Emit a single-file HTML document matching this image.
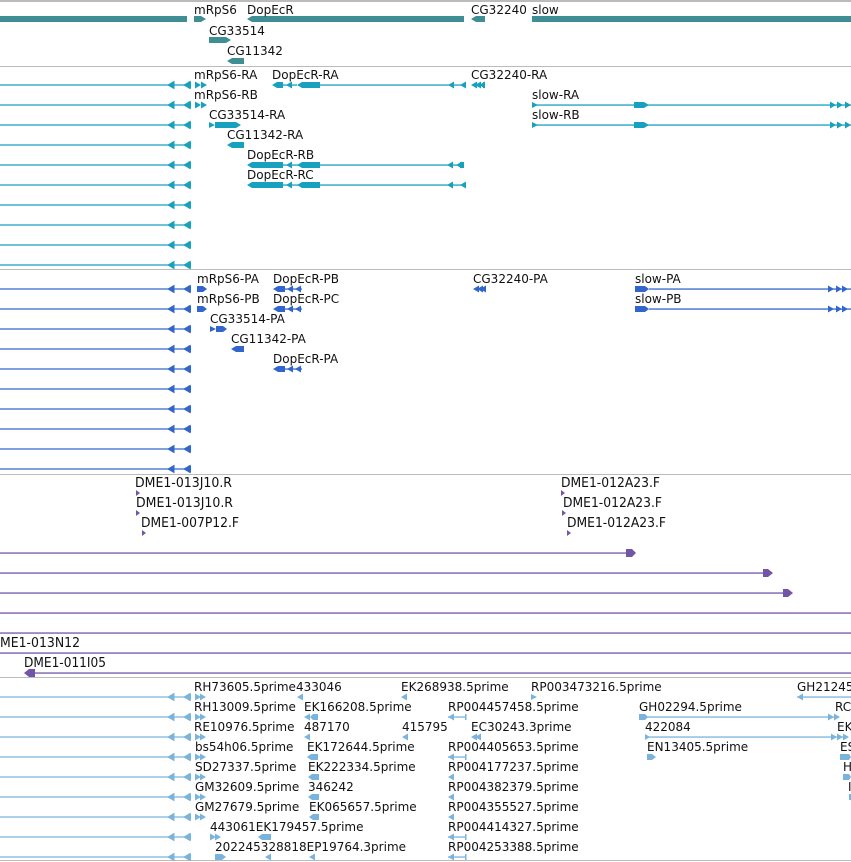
<!DOCTYPE html>
<html><head><meta charset="utf-8"><style>
html,body{margin:0;padding:0;background:#fff;width:851px;height:862px;overflow:hidden}
svg{display:block}
text{font-family:"DejaVu Sans","Liberation Sans",sans-serif;font-size:12px;fill:#111}
.p text{font-family:"DejaVu Sans Condensed","DejaVu Sans",sans-serif;font-size:13px}
</style></head><body>
<svg width="851" height="862" viewBox="0 0 851 862" xmlns="http://www.w3.org/2000/svg">
<defs>
<path id="la" d="M0 0L6 -3.5L6 3.5Z"/>
<path id="ra" d="M0 0L-6 -3.5L-6 3.5Z"/>
<g id="left">
<line x1="0" y1="0" x2="190" y2="0" stroke-width="1.2"/>
<use href="#la" x="168" y="0"/><use href="#la" x="184" y="0"/><rect x="189" y="-3" width="1.5" height="6"/>
</g>
</defs>
<g fill="#bbb">
<rect x="0" y="0" width="851" height="2"/>
<rect x="0" y="66" width="851" height="1"/>
<rect x="0" y="269" width="851" height="1"/>
<rect x="0" y="474" width="851" height="1"/>
<rect x="0" y="677" width="851" height="1"/>
<rect x="0" y="860" width="851" height="1"/>
</g>

<g fill="#3e8e93">
<rect x="0" y="16" width="187" height="6"/>
<path d="M194 16H201L206 19L201 22H194Z"/>
<path d="M247 19L252 16H464V22H252Z"/>
<path d="M471 19L476 16H485V22H476Z"/>
<rect x="532" y="16" width="319" height="6"/>
<path d="M209 37H226L231 40L226 43H209Z"/>
<path d="M227 61L232 58H244V64H232Z"/>
</g>
<text x="194" y="14">mRpS6</text><text x="247" y="14">DopEcR</text><text x="471" y="14">CG32240</text><text x="532" y="14">slow</text>
<text x="209" y="35">CG33514</text><text x="227" y="55">CG11342</text>

<g fill="#17a1bf" stroke="#17a1bf">
<use href="#left" y="85"/><use href="#left" y="105"/><use href="#left" y="125"/><use href="#left" y="145"/><use href="#left" y="165"/>
<use href="#left" y="185"/><use href="#left" y="205"/><use href="#left" y="225"/><use href="#left" y="245"/><use href="#left" y="265"/>
</g>
<g fill="#17a1bf" stroke="none">
<use href="#ra" x="201" y="85"/><use href="#ra" x="207" y="85"/>
<use href="#ra" x="201" y="105"/><use href="#ra" x="207" y="105"/>
<path d="M272 85L277 82H283V88H277Z"/><rect x="283" y="84.4" width="14" height="1.3"/><use href="#la" x="286" y="85"/>
<path d="M297 85L302 82H320V88H302Z"/><rect x="320" y="84.4" width="146" height="1.3"/><use href="#la" x="448" y="85"/><use href="#la" x="460" y="85"/>
<use href="#la" x="471" y="85"/><use href="#la" x="475" y="85"/><use href="#la" x="479" y="85"/><rect x="483" y="82" width="2" height="6"/>
<rect x="532" y="104.4" width="319" height="1.3"/><path d="M532 102L538 105L532 108Z"/><path d="M634 102H644L649 105L644 108H634Z"/>
<use href="#ra" x="836" y="105"/><use href="#ra" x="843" y="105"/><use href="#ra" x="851" y="105"/>
<rect x="532" y="124.4" width="319" height="1.3"/><path d="M532 122L538 125L532 128Z"/><path d="M634 122H644L649 125L644 128H634Z"/>
<use href="#ra" x="836" y="125"/><use href="#ra" x="843" y="125"/><use href="#ra" x="851" y="125"/>
<path d="M209 122L215 125L209 128Z"/><path d="M215 122H236L241 125L236 128H215Z"/>
<path d="M227 145L232 142H244V148H232Z"/>
<path d="M247 165L252 162H283V168H252Z"/><rect x="283" y="164.4" width="180" height="1.3"/><use href="#la" x="286" y="165"/>
<path d="M297 165L302 162H320V168H302Z"/><use href="#la" x="447" y="165"/><use href="#la" x="456" y="165"/><rect x="460" y="162" width="4" height="6"/>
<path d="M247 185L252 182H283V188H252Z"/><rect x="283" y="184.4" width="183" height="1.3"/><use href="#la" x="286" y="185"/>
<path d="M297 185L302 182H320V188H302Z"/><use href="#la" x="447" y="185"/><use href="#la" x="460" y="185"/>
</g>
<text x="194" y="79">mRpS6-RA</text><text x="272" y="79">DopEcR-RA</text><text x="471" y="79">CG32240-RA</text>
<text x="194" y="99">mRpS6-RB</text><text x="532" y="99">slow-RA</text>
<text x="209" y="119">CG33514-RA</text><text x="532" y="119">slow-RB</text>
<text x="227" y="139">CG11342-RA</text>
<text x="247" y="159">DopEcR-RB</text><text x="247" y="179">DopEcR-RC</text>

<g fill="#3366cc" stroke="#3366cc">
<use href="#left" y="289"/><use href="#left" y="309"/><use href="#left" y="329"/><use href="#left" y="349"/><use href="#left" y="369"/>
<use href="#left" y="389"/><use href="#left" y="409"/><use href="#left" y="429"/><use href="#left" y="449"/><use href="#left" y="469"/>
</g>
<g fill="#3366cc">
<path d="M197 286H203L207 289L203 292H197Z"/><path d="M197 306H203L207 309L203 312H197Z"/>
<path d="M273 289L278 286H285V292H278Z"/><rect x="285" y="288.4" width="17" height="1.3"/><use href="#la" x="287" y="289"/><use href="#la" x="295" y="289"/>
<path d="M273 309L278 306H285V312H278Z"/><rect x="285" y="308.4" width="17" height="1.3"/><use href="#la" x="287" y="309"/><use href="#la" x="295" y="309"/>
<path d="M273 369L278 366H285V372H278Z"/><rect x="285" y="368.4" width="17" height="1.3"/><use href="#la" x="287" y="369"/><use href="#la" x="295" y="369"/>
<use href="#la" x="473" y="289"/><use href="#la" x="477" y="289"/><use href="#la" x="480" y="289"/>
<path d="M635 286H645L649 289L645 292H635Z"/><rect x="649" y="288.4" width="202" height="1.3"/><use href="#ra" x="834" y="289"/><use href="#ra" x="842" y="289"/><use href="#ra" x="848" y="289"/>
<path d="M635 306H645L649 309L645 312H635Z"/><rect x="649" y="308.4" width="202" height="1.3"/><use href="#ra" x="834" y="309"/><use href="#ra" x="842" y="309"/><use href="#ra" x="848" y="309"/>
<path d="M210 326L216 329L210 332Z"/><path d="M216 326H223L227 329L223 332H216Z"/>
<path d="M231 349L236 346H244V352H236Z"/>
</g>
<text x="197" y="283">mRpS6-PA</text><text x="273" y="283">DopEcR-PB</text><text x="473" y="283">CG32240-PA</text><text x="635" y="283">slow-PA</text>
<text x="197" y="303">mRpS6-PB</text><text x="273" y="303">DopEcR-PC</text><text x="635" y="303">slow-PB</text>
<text x="210" y="323">CG33514-PA</text><text x="231" y="343">CG11342-PA</text><text x="273" y="363">DopEcR-PA</text>

<g class="p">
<g fill="#7355a8">
<path d="M136 490L140 493L136 496Z"/><path d="M136 510L140 513L136 516Z"/><path d="M142 530L146 533L142 536Z"/>
<path d="M561 490L565 493L561 496Z"/><path d="M562 510L566 513L562 516Z"/><path d="M567 530L571 533L567 536Z"/>
<rect x="0" y="552.4" width="630" height="1.3"/><path d="M626 549L632 549L636 553L632 557L626 557Z"/>
<rect x="0" y="572.4" width="767" height="1.3"/><path d="M763 569H768L773 573L768 577H763Z"/>
<rect x="0" y="592.4" width="787" height="1.3"/><path d="M783 589H788L793 593L788 597H783Z"/>
<rect x="0" y="612.4" width="851" height="1.3"/>
<rect x="0" y="632.4" width="851" height="1.3"/>
<rect x="0" y="652.4" width="851" height="1.3"/>
<rect x="30" y="672.4" width="821" height="1.3"/><path d="M24 673L29 669H35V677H29Z"/>
</g>
<text x="135" y="487" textLength="97" lengthAdjust="spacingAndGlyphs">DME1-013J10.R</text>
<text x="136" y="507" textLength="97" lengthAdjust="spacingAndGlyphs">DME1-013J10.R</text>
<text x="141" y="527" textLength="98" lengthAdjust="spacingAndGlyphs">DME1-007P12.F</text>
<text x="561" y="487" textLength="99" lengthAdjust="spacingAndGlyphs">DME1-012A23.F</text>
<text x="563" y="507" textLength="99" lengthAdjust="spacingAndGlyphs">DME1-012A23.F</text>
<text x="567" y="527" textLength="99" lengthAdjust="spacingAndGlyphs">DME1-012A23.F</text>
<text x="0" y="647" textLength="80" lengthAdjust="spacingAndGlyphs">ME1-013N12</text>
<text x="24" y="667" textLength="82" lengthAdjust="spacingAndGlyphs">DME1-011I05</text>
</g>

<g fill="#7ab4dc" stroke="#7ab4dc">
<use href="#left" y="697"/><use href="#left" y="717"/><use href="#left" y="737"/><use href="#left" y="757"/><use href="#left" y="777"/>
<use href="#left" y="797"/><use href="#left" y="817"/><use href="#left" y="837"/><use href="#left" y="857"/>
</g>
<g fill="#7ab4dc">
<use href="#ra" x="201" y="697"/><use href="#ra" x="206" y="697"/>
<use href="#ra" x="201" y="717"/><use href="#ra" x="206" y="717"/>
<use href="#ra" x="201" y="737"/><use href="#ra" x="206" y="737"/>
<use href="#ra" x="201" y="757"/><use href="#ra" x="206" y="757"/>
<use href="#ra" x="201" y="777"/><use href="#ra" x="206" y="777"/>
<use href="#ra" x="201" y="797"/><use href="#ra" x="206" y="797"/>
<use href="#ra" x="201" y="817"/><use href="#ra" x="206" y="817"/>
<use href="#ra" x="216" y="837"/><use href="#ra" x="221" y="837"/>
<path d="M215 854H222L226 857L222 860H215Z"/>
<use href="#la" x="297" y="697"/>
<use href="#la" x="304" y="717"/><path d="M310 717L313 714H318V720H313Z"/>
<use href="#la" x="304" y="737"/>
<path d="M307 757L311 754H318V760H311Z"/><path d="M308 777L312 774H319V780H312Z"/><path d="M308 797L312 794H319V800H312Z"/><path d="M309 817L313 814H319V820H313Z"/>
<path d="M258 837L262 834H271V840H262Z"/><use href="#la" x="265" y="857"/><use href="#la" x="309" y="857"/>
<use href="#la" x="401" y="697"/><use href="#la" x="402" y="737"/>
<path d="M531 694L537 697L531 700Z"/>
<use href="#la" x="471" y="737"/><use href="#la" x="475" y="737"/>
<rect x="448" y="716.4" width="18" height="1.3"/><use href="#la" x="448" y="717"/><rect x="465" y="714" width="1.5" height="6"/>
<rect x="448" y="756.4" width="18" height="1.3"/><use href="#la" x="448" y="757"/><rect x="465" y="754" width="1.5" height="6"/>
<rect x="448" y="836.4" width="18" height="1.3"/><use href="#la" x="448" y="837"/><rect x="465" y="834" width="1.5" height="6"/>
<rect x="448" y="856.4" width="18" height="1.3"/><use href="#la" x="448" y="857"/><rect x="465" y="854" width="1.5" height="6"/>
<use href="#la" x="448" y="777"/><use href="#la" x="448" y="797"/><use href="#la" x="448" y="817"/>
<rect x="797" y="696.4" width="54" height="1.3"/><use href="#la" x="797" y="697"/>
<path d="M639 714H645L648 717L645 720H639Z"/><rect x="645" y="716.4" width="190" height="1.3"/><use href="#ra" x="834" y="717"/><use href="#ra" x="840" y="717"/>
<path d="M645 734L650 737L645 740Z"/><rect x="645" y="736.4" width="200" height="1.3"/><use href="#ra" x="837" y="737"/><use href="#ra" x="843" y="737"/><use href="#ra" x="849" y="737"/>
<path d="M647 754H652L656 757L652 760H647Z"/>
<path d="M840 754H849L851 757L849 760H840Z"/><path d="M843 774H849L851 777L849 780H843Z"/><rect x="849" y="794" width="2" height="6"/>
</g>
<text x="194" y="691">RH73605.5prime433046</text><text x="401" y="691">EK268938.5prime</text><text x="531" y="691">RP003473216.5prime</text><text x="797" y="691">GH21245</text>
<text x="194" y="711">RH13009.5prime</text><text x="304" y="711">EK166208.5prime</text><text x="448" y="711">RP004457458.5prime</text><text x="639" y="711">GH02294.5prime</text><text x="835" y="711">RC</text>
<text x="194" y="731">RE10976.5prime</text><text x="304" y="731">487170</text><text x="402" y="731">415795</text><text x="471" y="731">EC30243.3prime</text><text x="645" y="731">422084</text><text x="837" y="731">EK</text>
<text x="195" y="751">bs54h06.5prime</text><text x="307" y="751">EK172644.5prime</text><text x="448" y="751">RP004405653.5prime</text><text x="647" y="751">EN13405.5prime</text><text x="840" y="751">ES</text>
<text x="195" y="771">SD27337.5prime</text><text x="308" y="771">EK222334.5prime</text><text x="448" y="771">RP004177237.5prime</text><text x="843" y="771">H</text>
<text x="195" y="791">GM32609.5prime</text><text x="308" y="791">346242</text><text x="448" y="791">RP004382379.5prime</text><text x="848" y="791">I</text>
<text x="195" y="811">GM27679.5prime</text><text x="309" y="811">EK065657.5prime</text><text x="448" y="811">RP004355527.5prime</text>
<text x="210" y="831">443061EK179457.5prime</text><text x="448" y="831">RP004414327.5prime</text>
<text x="215" y="851">202245328818EP19764.3prime</text><text x="448" y="851">RP004253388.5prime</text>
</svg>
</body></html>
